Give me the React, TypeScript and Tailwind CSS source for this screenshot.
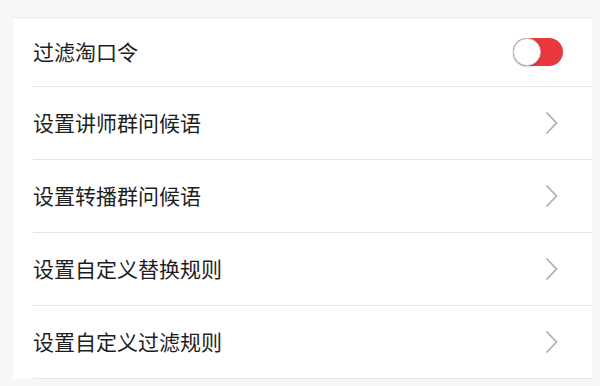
import React, { useState } from 'react';

const items = ['设置讲师群问候语', '设置转播群问候语', '设置自定义替换规则', '设置自定义过滤规则'];

const Chevron = () => (
  <svg width="13" height="24" viewBox="0 0 13 24" fill="none" className="shrink-0">
    <polyline points="1.5,1.5 11.5,12 1.5,22.5" stroke="#b0b0b0" strokeWidth="1.8" strokeLinejoin="miter" />
  </svg>
);

export default function App() {
  const [on, setOn] = useState(true);

  return (
    <div
      className="h-[386px] w-[600px] overflow-hidden bg-[#f7f7f7] pt-[17px] pl-[13px] pr-[8px]"
      style={{ fontFamily: '"Noto Sans CJK SC", "Noto Sans", sans-serif' }}
    >
      <div className="border-t border-[#ebebeb] bg-white pl-[20px]">
        <div className="flex h-[69px] items-center justify-between border-b border-[#e6e6e6] pr-[29px]">
          <span className="text-[21px] text-[#1e1e1e]">过滤淘口令</span>
          <button
            onClick={() => setOn(!on)}
            className={`relative h-[28px] w-[50px] rounded-full ${on ? 'bg-[#e8383d]' : 'bg-[#ddd]'}`}
          >
            <span className="absolute left-0 top-0 h-[28px] w-[28px] rounded-full border border-[#c8c8c8] bg-white shadow-[0_1px_2px_rgba(0,0,0,0.2)]" />
          </button>
        </div>
        {items.map((label) => (
          <div
            key={label}
            className="flex h-[73px] items-center justify-between border-b border-[#e6e6e6] pr-[34px]"
          >
            <span className="text-[21px] text-[#1e1e1e]">{label}</span>
            <Chevron />
          </div>
        ))}
      </div>
    </div>
  );
}
